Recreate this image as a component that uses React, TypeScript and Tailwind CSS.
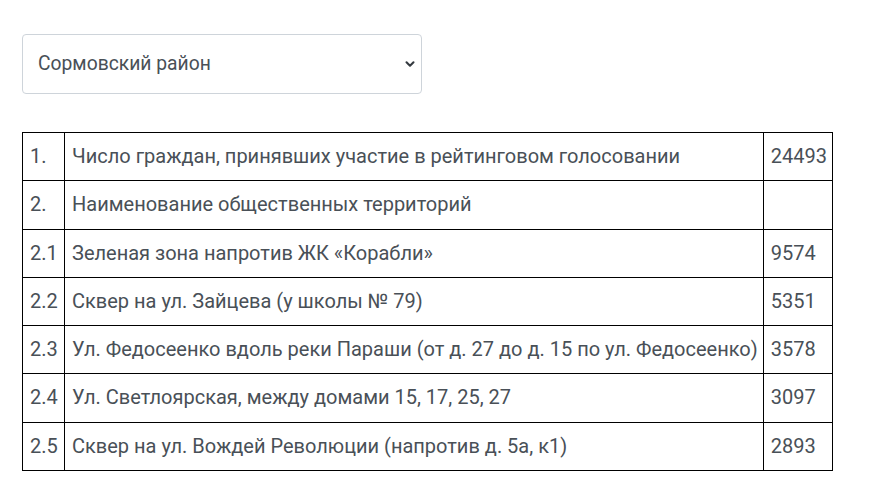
import { ChevronDown } from "lucide-react";

const rows = [
  { n: "1.", name: "Число граждан, принявших участие в рейтинговом голосовании", votes: "24493" },
  { n: "2.", name: "Наименование общественных территорий", votes: "" },
  { n: "2.1", name: "Зеленая зона напротив ЖК «Корабли»", votes: "9574" },
  { n: "2.2", name: "Сквер на ул. Зайцева (у школы № 79)", votes: "5351" },
  { n: "2.3", name: "Ул. Федосеенко вдоль реки Параши (от д. 27 до д. 15 по ул. Федосеенко)", votes: "3578" },
  { n: "2.4", name: "Ул. Светлоярская, между домами 15, 17, 25, 27", votes: "3097" },
  { n: "2.5", name: "Сквер на ул. Вождей Революции (напротив д. 5а, к1)", votes: "2893" },
];

export default function App() {
  return (
    <div className="min-h-screen bg-white px-[22px] pt-[34px] font-['Roboto',sans-serif] text-[#495057]">
      <div className="relative w-[400px]">
        <select className="h-[60px] w-full appearance-none rounded-[4px] border border-[#ced4da] bg-white pl-[15px] pr-10 text-[19.3px] text-[#495057] outline-none">
          <option>Сормовский район</option>
        </select>
        <ChevronDown
          size={14}
          strokeWidth={3.5}
          className="pointer-events-none absolute right-[5px] top-[23px] text-[#343a40]"
        />
      </div>

      <table className="mt-[38px] border-collapse text-[20px] leading-[29.3px]">
        <tbody>
          {rows.map((row) => (
            <tr key={row.n}>
              <td className="w-[42px] border border-black py-[9px] pl-[7px] pr-[4px]">{row.n}</td>
              <td className="border border-black py-[9px] pl-[7px] pr-[5px]">{row.name}</td>
              <td className="w-[69px] border border-black py-[9px] pl-[7px] pr-[4px]">{row.votes}</td>
            </tr>
          ))}
        </tbody>
      </table>
    </div>
  );
}
